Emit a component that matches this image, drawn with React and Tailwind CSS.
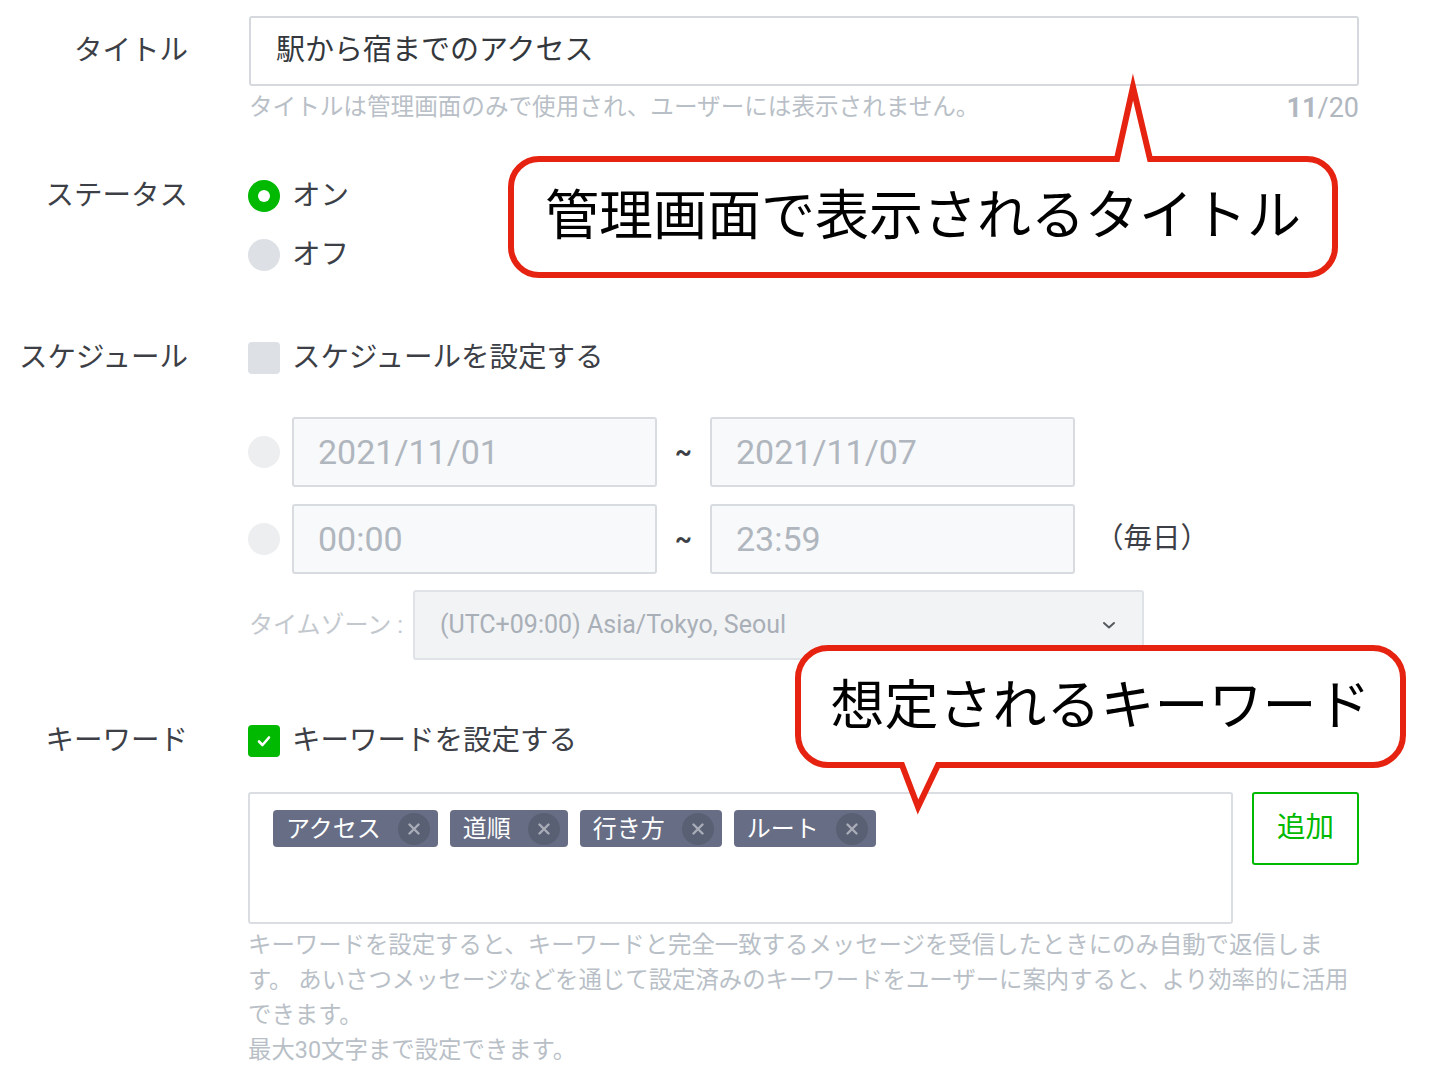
import React from 'react'

const font = "font-['Roboto','Noto_Sans_CJK_JP',sans-serif]"

function Label({ children, h = 'h-10' }) {
  return (
    <div className={`w-[188px] ${h} flex items-center justify-end shrink-0 text-[28.5px] text-[#3c4046]`}>
      {children}
    </div>
  )
}

function Radio({ checked, disabled }) {
  if (checked) {
    return (
      <span className="w-8 h-8 rounded-full bg-[#00b900] flex items-center justify-center shrink-0">
        <span className="w-3 h-3 rounded-full bg-white" />
      </span>
    )
  }
  return <span className={`w-8 h-8 rounded-full shrink-0 ${disabled ? 'bg-[#eceef0]' : 'bg-[#dde0e5]'}`} />
}

function Checkbox({ checked }) {
  if (checked) {
    return (
      <span className="w-8 h-8 rounded-[4px] bg-[#00b900] flex items-center justify-center shrink-0">
        <svg width="16" height="16" viewBox="0 0 16 16">
          <path d="M3 8.5 L6.5 12 L13 4.5" fill="none" stroke="white" strokeWidth="2.6" strokeLinecap="round" strokeLinejoin="round" />
        </svg>
      </span>
    )
  }
  return <span className="w-8 h-8 rounded-[4px] bg-[#dde0e5] shrink-0" />
}

function Tag({ text }) {
  return (
    <span className="h-[37px] rounded-[4px] bg-[#666d84] flex items-center pl-[13px] pr-2 text-white text-[24px] leading-none">
      <span>{text}</span>
      <span className="ml-[17px] w-8 h-8 rounded-full bg-[#5a6074] flex items-center justify-center">
        <svg width="12" height="12" viewBox="0 0 12 12">
          <path d="M1.5 1.5 L10.5 10.5 M10.5 1.5 L1.5 10.5" stroke="#a9adb8" strokeWidth="2.4" strokeLinecap="round" />
        </svg>
      </span>
    </span>
  )
}

function DateInput({ value }) {
  return (
    <div className="w-[365px] h-[70px] rounded-[3px] border-2 border-[#d8dce1] bg-[#f8f9fa] flex items-center pl-6 text-[34px] text-[#b0b6be]">
      {value}
    </div>
  )
}

function Tilde() {
  return <div className="w-[53px] flex items-center justify-center text-[26px] font-bold text-[#3c4046]">~</div>
}

export default function App() {
  return (
    <div className={`relative w-[1436px] h-[1072px] overflow-hidden bg-white pt-4 ${font}`}>
      {/* タイトル */}
      <div className="flex">
        <Label h="h-[70px]">タイトル</Label>
        <div className="ml-[61px] w-[1110px]">
          <div className="h-[70px] rounded-[3px] border-2 border-[#d5d9de] flex items-center pl-[25px] text-[29px] text-[#34383d]">
            駅から宿までのアクセス
          </div>
          <div className="mt-[7px] h-[30px] flex items-center justify-between">
            <span className="text-[23.6px] text-[#b9bfc7]">タイトルは管理画面のみで使用され、ユーザーには表示されません。</span>
            <span className="text-[27px] text-[#b1b7bf]">
              <span className="font-bold">11</span>/20
            </span>
          </div>
        </div>
      </div>

      {/* ステータス */}
      <div className="flex mt-[53px]">
        <Label>ステータス</Label>
        <div className="ml-[60px] flex flex-col gap-[19px] text-[28.5px] text-[#3c4046]">
          <div className="h-10 flex items-center gap-3">
            <Radio checked />
            <span>オン</span>
          </div>
          <div className="h-10 flex items-center gap-3">
            <Radio />
            <span>オフ</span>
          </div>
        </div>
      </div>

      {/* スケジュール */}
      <div className="flex mt-[63px]">
        <Label>スケジュール</Label>
        <div className="ml-[60px]">
          <div className="h-10 flex items-center gap-3 text-[28.5px] text-[#3c4046]">
            <Checkbox />
            <span>スケジュールを設定する</span>
          </div>
          <div className="mt-[39px] flex flex-col gap-[17px]">
            <div className="flex items-center gap-3">
              <Radio disabled />
              <div className="flex items-stretch">
                <DateInput value="2021/11/01" />
                <Tilde />
                <DateInput value="2021/11/07" />
              </div>
            </div>
            <div className="flex items-center gap-3">
              <Radio disabled />
              <div className="flex items-stretch">
                <DateInput value="00:00" />
                <Tilde />
                <DateInput value="23:59" />
              </div>
              <span className="ml-2 text-[28.5px] text-[#3c4046]">（毎日）</span>
            </div>
          </div>
          <div className="mt-4 flex items-center">
            <span className="w-[165px] pl-px text-[24px] text-[#c3c8ce]">タイムゾーン :</span>
            <div className="w-[731px] h-[70px] rounded-[3px] border-2 border-[#dfe2e6] bg-[#f2f3f5] flex items-center justify-between pl-[25px] pr-[26px] text-[25px] text-[#a9afb7]">
              <span>(UTC+09:00) Asia/Tokyo, Seoul</span>
              <svg width="14" height="10" viewBox="0 0 14 10">
                <path d="M2 3 L7 7.5 L12 3" fill="none" stroke="#555a60" strokeWidth="2" strokeLinecap="round" strokeLinejoin="round" />
              </svg>
            </div>
          </div>
        </div>
      </div>

      {/* キーワード */}
      <div className="flex mt-[61px]">
        <Label>キーワード</Label>
        <div className="ml-[60px] w-[1111px]">
          <div className="h-10 flex items-center gap-3 text-[28.5px] text-[#3c4046]">
            <Checkbox checked />
            <span>キーワードを設定する</span>
          </div>
          <div className="mt-[31px] flex items-start gap-[19px]">
            <div className="w-[985px] h-[132px] rounded-[3px] border-2 border-[#dadee3] pt-4 pl-[23px] flex items-start gap-3">
              <Tag text="アクセス" />
              <Tag text="道順" />
              <Tag text="行き方" />
              <Tag text="ルート" />
            </div>
            <button className="w-[107px] h-[73px] rounded-[3px] border-2 border-[#00b900] bg-white text-[28.5px] text-[#00b900] flex items-center justify-center">
              追加
            </button>
          </div>
          <div className="mt-[4px] text-[23.4px] leading-[35px] text-[#b9bfc7] whitespace-nowrap">
            <div>キーワードを設定すると、キーワードと完全一致するメッセージを受信したときにのみ自動で返信しま</div>
            <div>す。 あいさつメッセージなどを通じて設定済みのキーワードをユーザーに案内すると、より効率的に活用</div>
            <div>できます。</div>
            <div>最大30文字まで設定できます。</div>
          </div>
        </div>
      </div>

      {/* 吹き出し: タイトル */}
      <div className="absolute left-[500px] top-[65px] w-[846px] h-[221px]">
        <svg className="absolute inset-0" width="846" height="221" viewBox="0 0 846 221">
          <path
            d="M39 94 H617 L633 22 L650 94 H807 A28 28 0 0 1 835 122 V182 A28 28 0 0 1 807 210 H39 A28 28 0 0 1 11 182 V122 A28 28 0 0 1 39 94 Z"
            fill="white"
            stroke="#e62310"
            strokeWidth="6"
            strokeMiterlimit="10"
          />
        </svg>
        <div className="absolute left-[11px] right-[11px] top-[94px] h-[116px] flex items-center justify-center text-[54px] text-black leading-none">
          管理画面で表示されるタイトル
        </div>
      </div>

      {/* 吹き出し: キーワード */}
      <div className="absolute left-[787px] top-[637px] w-[627px] h-[195px]">
        <svg className="absolute inset-0" width="627" height="195" viewBox="0 0 627 195">
          <path
            d="M41 11 H586 A30 30 0 0 1 616 41 V98 A30 30 0 0 1 586 128 H151 L131 170 L115 128 H41 A30 30 0 0 1 11 98 V41 A30 30 0 0 1 41 11 Z"
            fill="white"
            stroke="#e62310"
            strokeWidth="6"
            strokeMiterlimit="10"
          />
        </svg>
        <div className="absolute left-[11px] right-[11px] top-[11px] h-[117px] flex items-center justify-center text-[54px] text-black leading-none">
          想定されるキーワード
        </div>
      </div>
    </div>
  )
}
